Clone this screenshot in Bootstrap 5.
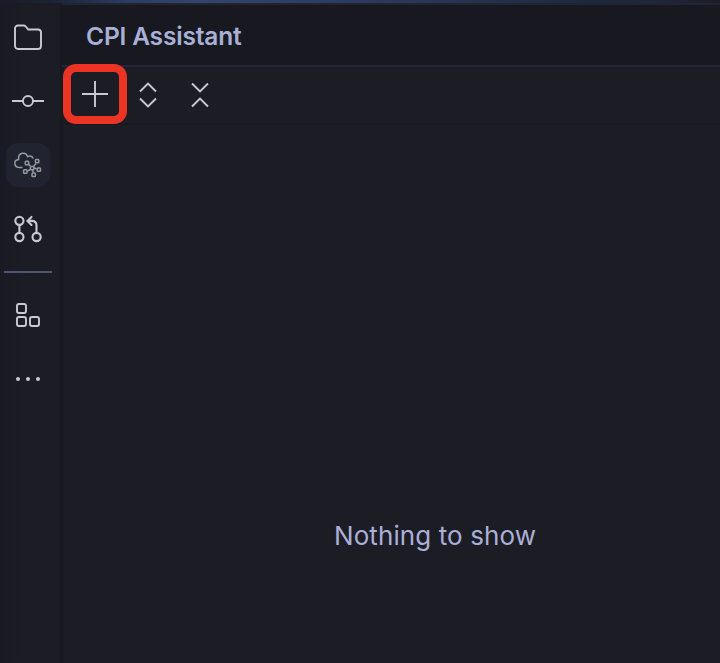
<!DOCTYPE html>
<html lang="en" data-bs-theme="dark">
<head>
<meta charset="utf-8">
<meta name="viewport" content="width=device-width, initial-scale=1">
<title>CPI Assistant</title>
<link rel="stylesheet" href="https://cdn.jsdelivr.net/npm/bootstrap@5.3.0/dist/css/bootstrap.min.css">
<style>
body{font-family:Inter,sans-serif;background:#1c1c25;color:#a9b0d6}
svg{display:block;fill:none;stroke:#c9cad1;stroke-width:1.9}
.title-strip{height:3px;background:linear-gradient(90deg,#191b25 0,#1d2233 50px,#2b3b62 125px,#344470 200px,#2c3b60 350px,#1f2940 580px,#1f2638 660px,#1c1c26)}
.tool-rail{width:60px;background:linear-gradient(90deg,#191a23 0,#1b1c24 26px,#1c1c25);border-top:2px solid #1a1b24}
.rail-btn{width:56px;height:64px}
.rail-tile{width:44px;height:44px;border-radius:12px}
.rail-tile.selected{background:#212330}
.cloud-icon{stroke:#929a9f;stroke-width:1.5}
.git-icon{stroke-width:2.1}
.dots-icon{fill:#c9cad1;stroke:none}
.rail-rule{width:48px;height:2px;margin:10px 4px;background:#4f557a}
.rail-edge{width:4px;background:linear-gradient(90deg,#181820 2px,#191a22 2px)}
.tool-pane{min-width:0;margin-left:-2px}
.pane-head{height:64px;background:#181820;border-top:2px solid #212431;border-bottom:2px solid #232534;padding:1px 0 0 24px}
.pane-title{font-size:24.5px;font-weight:600;line-height:60px;letter-spacing:-.17px;color:#a9b0d6}
.pane-tools{height:58px;border-bottom:2px solid #191920}
.add-box{width:64px;height:60px;margin:-3px 0 0 1px;border:8px solid #eb3423;border-radius:13px}
.empty-note{font-size:26px;line-height:32px;padding-top:395px;padding-left:88px;letter-spacing:.1px}
</style>
</head>
<body class="vh-100 overflow-hidden d-flex flex-column">
<div class="title-strip flex-shrink-0"></div>
<main class="d-flex flex-grow-1">
<nav class="tool-rail flex-shrink-0 d-flex flex-column">
<div class="rail-btn d-flex align-items-center justify-content-center"><svg width="32" height="32"><path d="M3 7.5a3 3 0 0 1 3-3h5.500c1 0 1.600.3 2.200 1L16.300 8.500H26a3 3 0 0 1 3 3V25a3 3 0 0 1-3 3H6a3 3 0 0 1-3-3Z"/></svg></div>
<div class="rail-btn d-flex align-items-center justify-content-center"><svg width="32" height="32"><path d="M0 16h11m10 0h11"/><circle cx="16" cy="16" r="5"/></svg></div>
<div class="rail-btn d-flex align-items-center justify-content-center"><div class="rail-tile selected d-flex align-items-center justify-content-center">
<svg class="cloud-icon" width="32" height="32"><path d="M10.500 18.600H8C1.600 18.600 1.200 11.300 6.600 10.600C5.800 3.200 14 2.200 15.600 7.700C18 6.200 20.500 7.200 21.200 9.500"/><path d="m16.700 15.600 1.700 1.400m3.300.2 2.300-2.600m-2 4.500 2.600.6m-6.500.8-2.800 1.700M20.600 21l.7 2.500"/><rect x="13.300" y="12.300" width="3.400" height="3.400" rx=".8"/><rect x="23.400" y="10.400" width="3.400" height="3.400" rx=".8"/><rect x="18.400" y="17.400" width="3.400" height="3.400" rx=".8"/><rect x="25.100" y="18.900" width="3.400" height="3.400" rx=".8"/><rect x="11.600" y="20.800" width="3.400" height="3.400" rx=".8"/><rect x="20" y="24.100" width="3.400" height="3.400" rx=".8"/></svg></div></div>
<div class="rail-btn d-flex align-items-center justify-content-center"><svg class="git-icon" width="32" height="32" stroke-linecap="round"><circle cx="7.400" cy="7.800" r="4.100"/><circle cx="7.400" cy="24" r="4.100"/><circle cx="24.600" cy="24" r="4.100"/><path d="M7.400 12v8M24.500 20v-7.500q0-4.600-4.600-4.600H15.500m4-4-4 4 4 4"/></svg></div>
<div class="rail-rule"></div>
<div class="rail-btn d-flex align-items-center justify-content-center"><svg width="32" height="32"><rect x="5" y="5" width="9" height="9" rx="2"/><rect x="5" y="18" width="9" height="9" rx="2"/><rect x="18" y="18" width="9" height="9" rx="2"/></svg></div>
<div class="rail-btn d-flex align-items-center justify-content-center"><svg class="dots-icon" width="32" height="32"><circle cx="6" cy="16" r="2"/><circle cx="16" cy="16" r="2"/><circle cx="26" cy="16" r="2"/></svg></div>
</nav>
<div class="rail-edge flex-shrink-0"></div>
<section class="tool-pane flex-grow-1">
<header class="pane-head"><h1 class="pane-title mb-0">CPI Assistant</h1></header>
<div class="pane-tools d-flex">
<div class="add-box flex-shrink-0 d-flex align-items-center justify-content-center"><svg width="28" height="28"><path d="M14 1v26M1 14h26"/></svg></div>
<div class="d-flex align-items-center ms-1"><svg width="34" height="32"><path d="m9 12.500 8-8 8 8M9 19.500l8 8 8-8"/></svg></div>
<div class="d-flex align-items-center ms-3"><svg width="38" height="32"><path d="m11 4.500 8 8 8-8M11 27.500l8-8 8 8"/></svg></div>
</div>
<div class="empty-note text-center">Nothing to show</div>
</section>
</main>
<script src="https://cdn.jsdelivr.net/npm/bootstrap@5.3.0/dist/js/bootstrap.bundle.min.js"></script>
</body>
</html>
